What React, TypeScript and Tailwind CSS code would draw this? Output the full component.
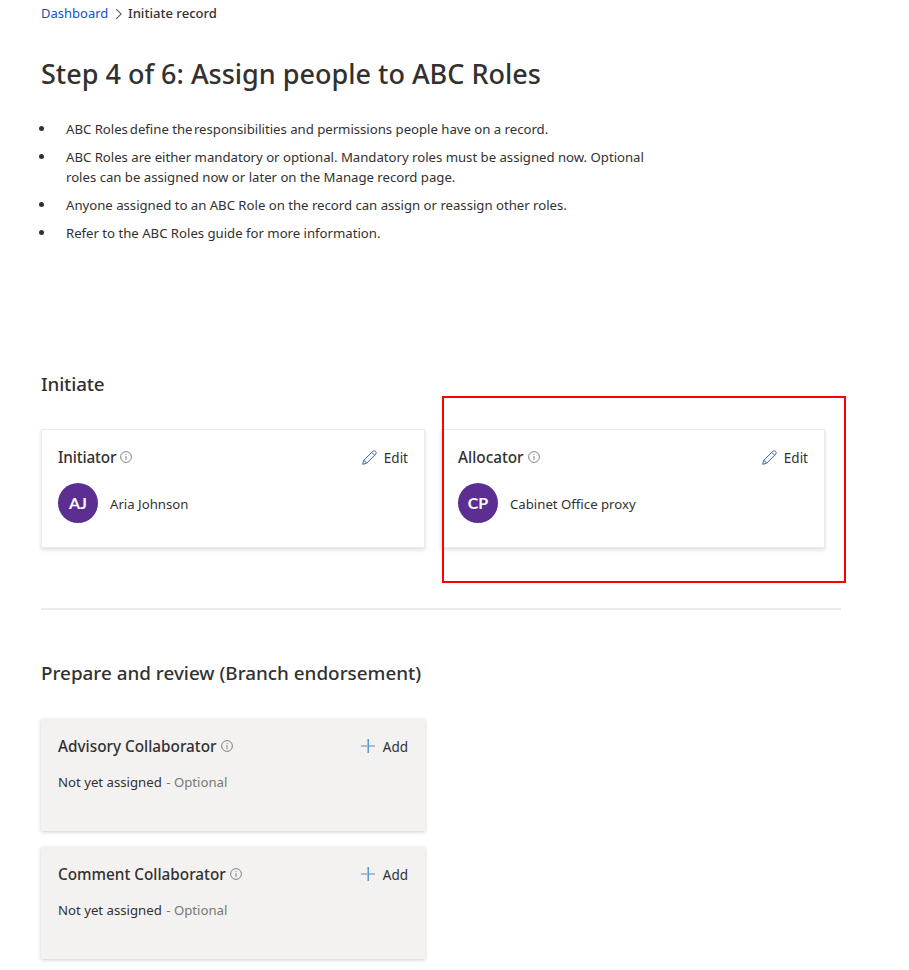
import type { ReactNode } from "react";

function InfoIcon() {
  return (
    <svg width="12" height="12" viewBox="0 0 12 12" fill="none" className="shrink-0">
      <circle cx="6" cy="6" r="5.4" stroke="#706e6c" strokeWidth="0.85" />
      <path d="M6 5v4M6 3v1" stroke="#6b8296" strokeWidth="0.95" />
    </svg>
  );
}

function PencilIcon() {
  return (
    <svg width="15" height="15" viewBox="0 0 15 15" fill="none" stroke="#3c64b4" strokeWidth="1" strokeLinejoin="round">
      <path d="M0.7 14.3 1.7 10.4 10.8 1.3Q12.3 0.2 13.6 1.4 14.8 2.7 13.7 4.2L4.6 13.3Z" />
      <path d="M9.8 2.4 12.6 5.2M1.7 10.4Q4 11 4.6 13.3" />
    </svg>
  );
}

function PlusIcon() {
  return (
    <svg width="14" height="14" viewBox="0 0 14 14" fill="none">
      <path d="M0 7h14" stroke="#b0bad4" strokeWidth="2" />
      <path d="M6.5 0v14" stroke="#d3a9c8" />
      <path d="M7.5 0v14" stroke="#5a9bd0" />
    </svg>
  );
}

function RoleTitle({ children }: { children: ReactNode }) {
  return (
    <h3 className="flex items-center gap-1 text-[15.3px] leading-5 font-medium">
      {children}
      <InfoIcon />
    </h3>
  );
}

function PersonCard({ role, initials, name }: { role: ReactNode; initials: string; name: string }) {
  return (
    <section className="h-[119px] w-96 border border-[#ebebeb] bg-white px-4 pt-[17px] shadow-[0_2px_4px_rgba(0,0,0,0.13)]">
      <div className="flex h-5 items-center justify-between">
        <RoleTitle>{role}</RoleTitle>
        <button className="flex items-center gap-[7px] text-[13.5px] leading-5"><PencilIcon /><span className="pt-0.5">Edit</span></button>
      </div>
      <div className="mt-4 flex items-center gap-3">
        <div className="flex size-10 items-center justify-center rounded-full bg-[#5c2e91] font-['Lato','Noto_Sans',sans-serif] text-[16px] font-bold text-white">{initials}</div>
        <span className="pt-[3px] text-[13.2px]">{name}</span>
      </div>
    </section>
  );
}

function EmptyCard({ role }: { role: string }) {
  return (
    <section className="h-28 w-96 bg-[#f3f2f1] px-[17px] pt-[17px] shadow-[0_1px_4px_rgba(0,0,0,0.2)]">
      <div className="flex h-5 items-center justify-between">
        <RoleTitle>{role}</RoleTitle>
        <button className="flex items-center gap-2 text-[13.5px] leading-5"><PlusIcon /><span className="pt-0.5">Add</span></button>
      </div>
      <p className="mt-4 text-[13.2px] leading-5">Not yet assigned <span className="ml-px text-[#797775]">- Optional</span></p>
    </section>
  );
}

const notes: ReactNode[] = [
  <>ABC Roles <span className="-ml-[1.5px]">define the</span> <span className="-ml-[2px]">responsibilities and permissions people have on a record.</span></>,
  "ABC Roles are either mandatory or optional. Mandatory roles must be assigned now. Optional roles can be assigned now or later on the Manage record page.",
  "Anyone assigned to an ABC Role on the record can assign or reassign other roles.",
  "Refer to the ABC Roles guide for more information.",
];

export default function App() {
  return (
    <main className="h-[970px] w-[909px] overflow-hidden bg-white pl-[41px] font-['Noto_Sans',sans-serif] text-[#323130]">
      <nav className="flex h-[27px] items-center text-[13px]">
        <a className="w-[67px] text-[#1450c0]">Dashboard</a>
        <svg width="8" height="12" viewBox="0 0 8 12" fill="none" stroke="#605e5c" strokeWidth="1.1" className="mr-[5px] ml-[7px]"><path d="M1.2 1.2 6.2 6 1.2 10.8" /></svg>
        <span className="text-[13.1px] font-medium">Initiate record</span>
      </nav>
      <h1 className="mt-[27px] text-[27px] leading-10 font-medium">Step 4 of 6: Assign people to ABC Roles</h1>
      <ul className="mt-[25px] flex w-[605px] flex-col gap-2 text-[13.2px] leading-5 tracking-[-0.02px]">
        {notes.map((note, i) => (
          <li key={i} className="flex">
            <span className="mt-[7px] mr-[22px] -ml-0.5 size-[5px] shrink-0 rounded-full bg-[#323130]" />
            <span>{note}</span>
          </li>
        ))}
      </ul>
      <h2 className="mt-[127px] text-[18.85px] leading-7 font-medium tracking-[-0.15px]">Initiate</h2>
      <div className="relative mt-[31px] flex gap-4">
        <PersonCard role={<span className="tracking-[-0.15px]">Initiator</span>} initials="AJ" name="Aria Johnson" />
        <PersonCard role="Allocator" initials="CP" name="Cabinet Office proxy" />
        <div className="absolute top-[-33px] left-[401px] h-[187px] w-[404px] border-2 border-[#ff0000]" />
      </div>
      <hr className="mt-[60px] w-[800px] border-t-2 border-[#ebebeb]" />
      <h2 className="mt-[49px] text-[18.85px] leading-7 font-medium">Prepare and review (Branch endorsement)</h2>
      <div className="mt-8 flex flex-col gap-4">
        <EmptyCard role="Advisory Collaborator" />
        <EmptyCard role="Comment Collaborator" />
      </div>
    </main>
  );
}
